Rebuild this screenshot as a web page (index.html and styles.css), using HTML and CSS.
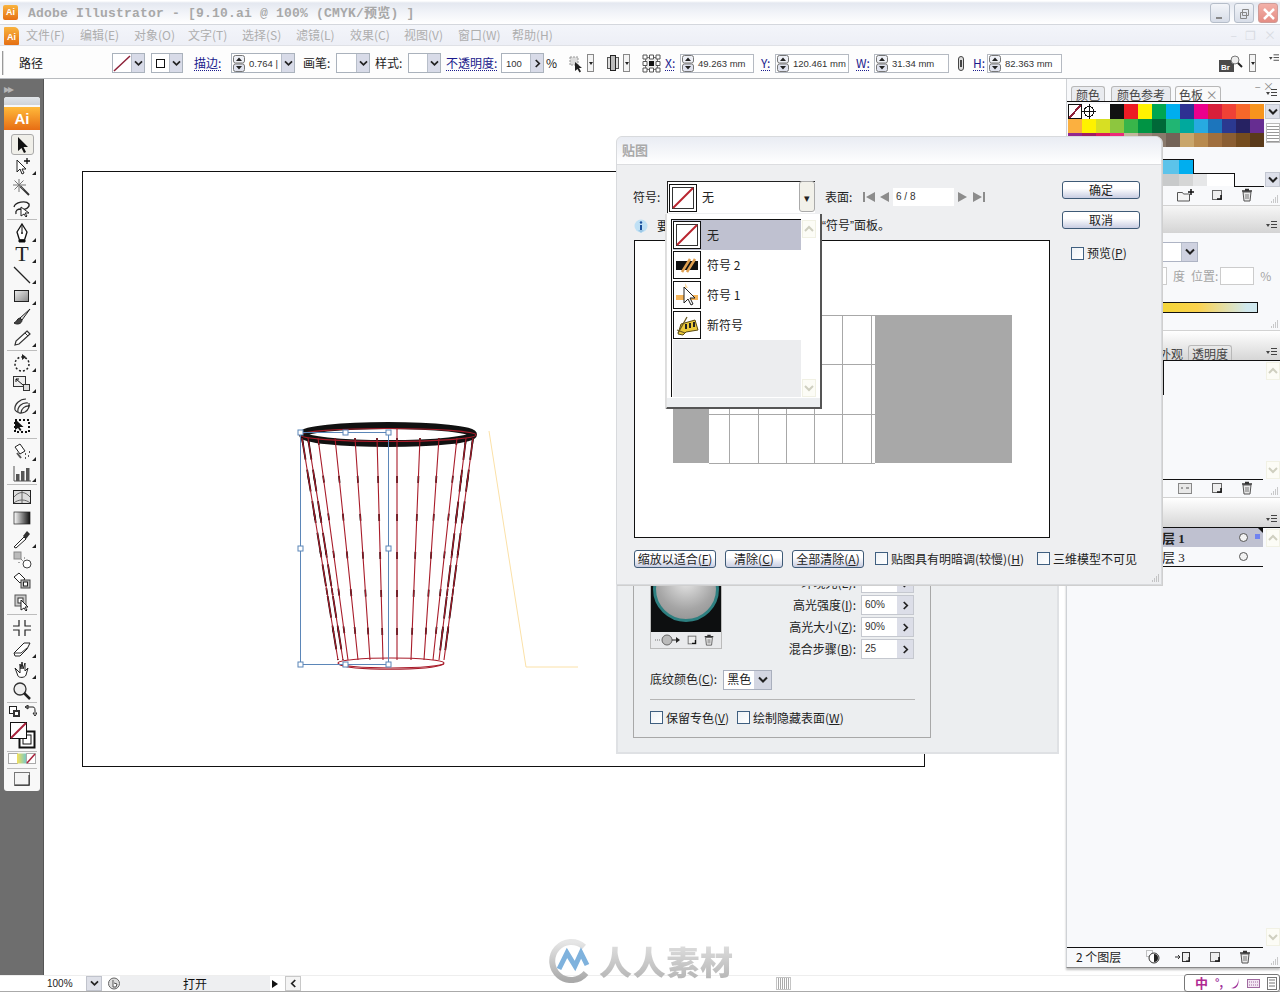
FILE: index.html
```html
<!DOCTYPE html>
<html lang="zh">
<head>
<meta charset="utf-8">
<title>Adobe Illustrator</title>
<link rel="stylesheet" href="styles.css">
</head>
<body>
<svg class="defs" aria-hidden="true">
  <symbol id="chev" viewBox="0 0 10 8"><path d="M1 1.5 5 5.5 9 1.5" fill="none" stroke="#222" stroke-width="2"/></symbol>
  <symbol id="chevr" viewBox="0 0 8 10"><path d="M2 1 6 5 2 9" fill="none" stroke="#222" stroke-width="2"/></symbol>
  <symbol id="up" viewBox="0 0 10 8"><path d="M1 6 5 2 9 6" fill="none" stroke="#cfcfc0" stroke-width="2"/></symbol>
  <symbol id="down" viewBox="0 0 10 8"><path d="M1 2 5 6 9 2" fill="none" stroke="#cfcfc0" stroke-width="2"/></symbol>
  <symbol id="spin" viewBox="0 0 12 17"><rect x=".5" y=".5" width="11" height="7.5" rx="2" fill="#eef0f6" stroke="#777"/><rect x=".5" y="9" width="11" height="7.5" rx="2" fill="#dfe2ee" stroke="#777"/><path d="M3 6 6 2.5 9 6z M3 11 6 14.5 9 11z" fill="#222"/></symbol>
  <symbol id="none" viewBox="0 0 28 28"><rect x=".5" y=".5" width="27" height="27" fill="#fff" stroke="#111"/><rect x="3.5" y="3.5" width="21" height="21" fill="#fff" stroke="#333"/><path d="M4 24 24 4" stroke="#b8242e" stroke-width="2"/></symbol>
  <symbol id="trash" viewBox="0 0 14 14"><path d="M3 4h8l-1 9H4z" fill="#e8e8e8" stroke="#555"/><path d="M2 3h10M5 1.500h4" stroke="#333" stroke-width="1.500"/><path d="M6 6v5M8 6v5" stroke="#777"/></symbol>
  <symbol id="newdoc" viewBox="0 0 14 14"><rect x="2.500" y="2.500" width="9" height="9" fill="#eee" stroke="#666"/><path d="M7 11 11 11 11 7" fill="none" stroke="#111" stroke-width="1.500"/></symbol>
  <symbol id="folder" viewBox="0 0 18 14"><path d="M1.500 4.500h5l1 1.500h6v7h-12z" fill="#f4f4f4" stroke="#555"/><path d="M15 1v6M12 4h6" stroke="#111" stroke-width="1.500"/></symbol>
  <symbol id="menu" viewBox="0 0 11 8"><path d="M0 3h4L2 6z" fill="#444"/><path d="M5 .5h6M5 3.500h6M5 6.500h6" stroke="#444"/></symbol>
  <symbol id="grip" viewBox="0 0 9 9"><path d="M8 1h1M6 3h1M8 3h1M4 5h1M6 5h1M8 5h1M2 7h1M4 7h1M6 7h1M8 7h1" stroke="#999" stroke-width="1"/></symbol>
</svg>

<div class="app">
  <header class="titlebar">
    <span class="applogo">Ai</span>
    <span class="apptitle">Adobe Illustrator - [9.10.ai @ 100% (CMYK/预览) ]</span>
    <div class="winctl">
      <span class="wbtn"><svg width="19" height="20" viewBox="0 0 19 20"><path d="M5 14h6" stroke="#888" stroke-width="2"/></svg></span>
      <span class="wbtn"><svg width="19" height="20" viewBox="0 0 19 20"><path d="M7.500 5.500h6v6h-6zM5.500 8.500h6v6h-6z" fill="none" stroke="#888"/></svg></span>
      <span class="wbtn wclose"><svg width="20" height="20" viewBox="0 0 20 20"><path d="M5 5 15 15M15 5 5 15" stroke="#fff" stroke-width="2.500"/></svg></span>
    </div>
  </header>

  <nav class="menubar">
    <span class="docicon">Ai</span>
    <span class="mi">文件(F)</span><span class="mi">编辑(E)</span><span class="mi">对象(O)</span><span class="mi">文字(T)</span><span class="mi">选择(S)</span><span class="mi">滤镜(L)</span><span class="mi">效果(C)</span><span class="mi">视图(V)</span><span class="mi">窗口(W)</span><span class="mi">帮助(H)</span>
    <div class="docctl"><i>–</i><i>❐</i><i>×</i></div>
  </nav>

  <div class="ctrlbar">
    <span class="grip"></span>
    <span class="lb w26 ml15">路径</span>
    <span class="sel w33 ml67"><span class="selbox"><svg width="18" height="17" viewBox="0 0 18 17"><path d="M1 16 17 1" stroke="#8d2038" stroke-width="1.500"/></svg></span><span class="arw"><svg width="9" height="7"><use href="#chev"/></svg></span></span>
    <span class="sel w32 ml6"><span class="selbox"><svg width="9" height="9" viewBox="0 0 9 9"><rect x=".5" y=".5" width="8" height="8" fill="none" stroke="#111"/></svg></span><span class="arw"><svg width="9" height="7"><use href="#chev"/></svg></span></span>
    <span class="lb lnk w26 ml11">描边:</span>
    <span class="sel w64 ml11"><span class="spinbox"><svg width="12" height="17"><use href="#spin"/></svg></span><span class="selbox val">0.764 |</span><span class="arw"><svg width="9" height="7"><use href="#chev"/></svg></span></span>
    <span class="lb w28 ml8">画笔:</span>
    <span class="sel w34 ml5"><span class="selbox"></span><span class="arw"><svg width="9" height="7"><use href="#chev"/></svg></span></span>
    <span class="lb w27 ml5">样式:</span>
    <span class="sel w33 ml6"><span class="selbox"></span><span class="arw"><svg width="9" height="7"><use href="#chev"/></svg></span></span>
    <span class="lb lnk w51 ml5">不透明度:</span>
    <span class="sel w43 ml4"><span class="selbox val">100</span><span class="arw"><svg width="7" height="9"><use href="#chevr"/></svg></span></span>
    <span class="lb w11 ml2">%</span>
    <svg class="ic ml10" width="19" height="19" viewBox="0 0 19 19"><path d="M3 3h8v8H3z" fill="#ddd" stroke="#999" stroke-dasharray="2 1"/><path d="M8 8v9l2.500-2 2 3.500 1.500-1-2-3.500h3z" fill="#222"/></svg>
    <span class="tiny ml1"></span>
    <svg class="ic ml12" width="14" height="18" viewBox="0 0 14 18"><rect x="1.500" y="3.500" width="11" height="11" fill="#ddd" stroke="#555"/><rect x="4.500" y="1.500" width="5" height="15" fill="#bbb" stroke="#222"/></svg>
    <span class="tiny ml3"></span>
    <svg class="ic ml12" width="19" height="19" viewBox="0 0 19 19"><rect x="3.500" y="3.500" width="12" height="12" fill="#eee" stroke="#777"/><rect x="7" y="7" width="5" height="5" fill="#111"/><path d="M1 1h4v4H1zM7.500 1h4v4h-4zM14 1h4v4h-4zM1 7.500h4v4H1zM14 7.500h4v4h-4zM1 14h4v4H1zM7.500 14h4v4h-4zM14 14h4v4h-4z" fill="#fff" stroke="#555"/></svg>
    <span class="lb lnk w12 ml4">X:</span>
    <span class="fld w74 ml3"><svg width="12" height="17"><use href="#spin"/></svg><b>49.263 mm</b></span>
    <span class="lb lnk w12 ml7">Y:</span>
    <span class="fld w74 ml2"><svg width="12" height="17"><use href="#spin"/></svg><b>120.461 mm</b></span>
    <span class="lb lnk w14 ml7">W:</span>
    <span class="fld w75 ml4"><svg width="12" height="17"><use href="#spin"/></svg><b>31.34 mm</b></span>
    <svg class="ic ml8" width="8" height="17" viewBox="0 0 8 17"><rect x="1.500" y="1.500" width="5" height="14" rx="2.500" fill="#ddd" stroke="#444"/><rect x="3" y="5" width="2" height="7" fill="#444"/></svg>
    <span class="lb lnk w12 ml8">H:</span>
    <span class="fld w75 ml2"><svg width="12" height="17"><use href="#spin"/></svg><b>82.363 mm</b></span>
    <svg class="ic ml157" width="24" height="17" viewBox="0 0 24 17"><rect x="0" y="5" width="15" height="12" fill="#4a4a4a"/><text x="2" y="15" font-size="8" font-weight="bold" fill="#fff" font-family="Liberation Sans">Br</text><circle cx="16" cy="5" r="4" fill="#eee" stroke="#777"/><path d="M19 8l4 4" stroke="#222" stroke-width="2"/></svg>
    <span class="tiny ml6"></span>
    <svg class="ic ml13 up6" width="10" height="8"><use href="#menu"/></svg>
  </div>

  <main class="main">
    <aside class="toolcol">
      <div class="chevs">▸▸</div>
      <div class="toolbox">
        <div class="tbhead"></div>
        <div class="ailogo">Ai</div>

        <div class="tgroup first">
          <div class="tool active"><svg viewBox="0 0 22 20"><path d="M7 2v14l3.500-3 2.500 5 2-1-2.500-5h4.500z" fill="#111"/></svg></div>
          <div class="tool more"><svg viewBox="0 0 22 20"><path d="M6 4v12l3-3 2 5 2-1-2-4h4z" fill="#fff" stroke="#222"/><path d="M16 2v6M13 5h6" stroke="#111" stroke-width="1.300"/></svg></div>
          <div class="tool"><svg viewBox="0 0 22 20"><path d="M9 9 18 18" stroke="#333" stroke-width="2"/><path d="M8 2v13M2 8h13M3.500 3.500l9 9M12.500 3.500l-9 9" stroke="#777"/></svg></div>
          <div class="tool"><svg viewBox="0 0 22 20"><path d="M3 9c1-5 12-7 15-3 1 4-4 6-8 5-3 0-6 1-5 5" fill="none" stroke="#222" stroke-width="1.300"/><path d="M10 9v9l3-2 2 3 1-1-2-3h4z" fill="#fff" stroke="#222"/></svg></div>
        </div>

        <div class="tgroup g2">
          <div class="tool more"><svg viewBox="0 0 22 20"><path d="M11 1 16 9 13.500 17h-5L6 9z" fill="#fff" stroke="#111" stroke-width="1.300"/><path d="M11 2v7M8 17h6v2H8z" stroke="#111"/><circle cx="11" cy="10" r="1" fill="#111"/></svg></div>
          <div class="tool more ttxt">T</div>
          <div class="tool more"><svg viewBox="0 0 22 20"><path d="M3 2 19 18" stroke="#222" stroke-width="1.200"/></svg></div>
          <div class="tool more"><svg viewBox="0 0 22 20"><defs><linearGradient id="g1" x1="0" y1="0" x2="1" y2="1"><stop offset="0" stop-color="#eee"/><stop offset="1" stop-color="#888"/></linearGradient></defs><rect x="3.500" y="4.500" width="14" height="11" fill="url(#g1)" stroke="#222"/></svg></div>
          <div class="tool"><svg viewBox="0 0 22 20"><path d="M19 2 9 11l2 2z" fill="#ddd" stroke="#222"/><path d="M9 11c-3 0-3 4-6 5 3 2 8 1 8-3z" fill="#444" stroke="#222"/></svg></div>
          <div class="tool more"><svg viewBox="0 0 22 20"><path d="M16 3l3 3L8 16l-4 1 1-4z" fill="#fff" stroke="#333" stroke-width="1.200"/><path d="M14 5l3 3" stroke="#333"/></svg></div>
        </div>

        <div class="tgroup g3">
          <div class="tool more"><svg viewBox="0 0 22 20"><circle cx="11" cy="11" r="7" fill="none" stroke="#222" stroke-width="1.500" stroke-dasharray="2 2"/><path d="M11 1v6l4-3z" fill="#222"/></svg></div>
          <div class="tool more"><svg viewBox="0 0 22 20"><rect x="2.500" y="2.500" width="12" height="10" fill="#eee" stroke="#333"/><rect x="12.500" y="10.500" width="6" height="6" fill="#ddd" stroke="#333"/><path d="M5 5l7 6M5 5h3M5 5v3" fill="none" stroke="#111"/></svg></div>
          <div class="tool more"><svg viewBox="0 0 22 20"><path d="M4 15C3 9 9 4 15 4M7 17c-1-5 4-10 10-9M10 18c0-4 4-8 9-7M4 15c2 3 6 4 10 2 3-2 5-4 4-9" fill="none" stroke="#333" stroke-width="1.200"/></svg></div>
          <div class="tool"><svg viewBox="0 0 22 20"><rect x="4" y="4" width="14" height="12" fill="none" stroke="#111" stroke-width="2" stroke-dasharray="2 2"/><path d="M4 3v11l3-2 2 3 1.500-1-2-3h4z" fill="#111"/></svg></div>
        </div>

        <div class="tgroup g4">
          <div class="tool more"><svg viewBox="0 0 22 20"><path d="M4 5l5-3 5 7-5 3z" fill="#fff" stroke="#222"/><path d="M6 11l4 5" stroke="#555" stroke-width="2"/><path d="M14 12h1M17 14h1M14 16h1M18 10h1" stroke="#222" stroke-width="1.500"/></svg></div>
          <div class="tool more"><svg viewBox="0 0 22 20"><path d="M3 3v15h17" fill="none" stroke="#555"/><rect x="5" y="11" width="3.500" height="7" fill="#555"/><rect x="10" y="8" width="3.500" height="10" fill="#555"/><rect x="15" y="5" width="3.500" height="13" fill="#555"/></svg></div>
        </div>

        <div class="tgroup g5">
          <div class="tool"><svg viewBox="0 0 22 20"><rect x="2.500" y="3.500" width="17" height="13" fill="#ddd" stroke="#222"/><path d="M3 10c5-6 11-6 16 0M11 4v12M3 16c4-4 12-4 16 0" fill="none" stroke="#666"/></svg></div>
          <div class="tool"><svg viewBox="0 0 22 20"><defs><linearGradient id="g2"><stop offset="0" stop-color="#fff"/><stop offset="1" stop-color="#111"/></linearGradient></defs><rect x="3" y="4" width="16" height="12" fill="url(#g2)" stroke="#222" stroke-width=".7"/></svg></div>
          <div class="tool more"><svg viewBox="0 0 22 20"><path d="M3 18l10-10 2 2L5 19z" fill="#fff" stroke="#222"/><path d="M12 7l4-5 3 3-4 5z" fill="#333"/></svg></div>
          <div class="tool"><svg viewBox="0 0 22 20"><rect x="3" y="2" width="7" height="7" fill="#bbb" stroke="#888"/><circle cx="16" cy="14" r="4" fill="#fff" stroke="#444"/><path d="M10 9l2 2M13 8h1M8 12v1" stroke="#555" stroke-dasharray="1 1"/></svg></div>
          <div class="tool"><svg viewBox="0 0 22 20"><path d="M3 6l5-4 6 6-5 4z" fill="#fff" stroke="#222"/><rect x="10" y="9" width="9" height="8" fill="#bbb" stroke="#444"/><rect x="12.500" y="11" width="4" height="4" fill="#fff" stroke="#222"/></svg></div>
          <div class="tool"><svg viewBox="0 0 22 20"><rect x="4" y="3" width="11" height="11" fill="#ccc" stroke="#555"/><rect x="7" y="6" width="5" height="5" fill="#fff" stroke="#333"/><path d="M10 8v10l3-2 2 3 1-1-2-3h3z" fill="#fff" stroke="#222"/></svg></div>
        </div>

        <div class="tgroup g6">
          <div class="tool"><svg viewBox="0 0 22 20"><path d="M8 2v6H2M14 2v6h6M8 18v-6H2M14 18v-6h6" fill="none" stroke="#222" stroke-width="1.200"/></svg></div>
          <div class="tool more"><svg viewBox="0 0 22 20"><path d="M3 14 13 4h6l-3 6-7 7H4z" fill="#fff" stroke="#222"/><path d="M3 14h7l6-5" fill="none" stroke="#333"/></svg></div>
          <div class="tool more"><svg viewBox="0 0 22 20"><path d="M4 8l5 5V4l1 5 1-7 1 7 2-6v8l3-3-2 7c-1 3-7 3-8 1z" fill="#fff" stroke="#222"/></svg></div>
          <div class="tool"><svg viewBox="0 0 22 20"><circle cx="9" cy="8" r="6" fill="#eee" stroke="#333" stroke-width="1.300"/><path d="M13 12l6 6" stroke="#222" stroke-width="2.500"/></svg></div>
        </div>

        <div class="tgroup g7">
          <div class="swaprow">
            <svg width="13" height="13" viewBox="0 0 13 13"><rect x="1.500" y="1.500" width="7" height="7" fill="#fff" stroke="#222"/><rect x="5" y="5" width="7" height="7" fill="#333"/><rect x="7" y="7" width="3" height="3" fill="#fff"/></svg>
            <svg width="13" height="13" viewBox="0 0 13 13"><path d="M2 2h7c2 0 2 2 2 5M1 2l3-2v4zM11 11l-2-3h4z" fill="none" stroke="#222"/></svg>
          </div>
          <svg class="fillstroke" width="26" height="27" viewBox="0 0 26 27"><rect x="9.500" y="9.500" width="15" height="16" fill="#fff" stroke="#111" stroke-width="2"/><rect x="13" y="13" width="8" height="9" fill="#fff" stroke="#111"/><rect x=".5" y=".5" width="16" height="16" fill="#fff" stroke="#111"/><path d="M1 16 16 1" stroke="#a8203a" stroke-width="2"/></svg>
        </div>

        <div class="tgroup g8">
          <svg width="28" height="11" viewBox="0 0 28 11"><rect x=".5" y=".5" width="9" height="10" fill="#fff" stroke="#aaa"/><defs><linearGradient id="g3"><stop offset="0" stop-color="#f5e15a"/><stop offset="1" stop-color="#7bc9c3"/></linearGradient></defs><rect x="9" y=".5" width="9" height="10" fill="url(#g3)"/><rect x="18.500" y=".5" width="9" height="10" fill="#fff" stroke="#aaa"/><path d="M19 10 27 1" stroke="#a8203a" stroke-width="1.500"/></svg>
        </div>
        <div class="tgroup g9">
          <svg width="16" height="14" viewBox="0 0 16 14"><rect x=".5" y=".5" width="15" height="13" fill="#f4f4f4" stroke="#777"/><path d="M1 13h14V3" fill="none" stroke="#222"/></svg>
        </div>
      </div>
    </aside>

    <div class="canvas">
      <svg class="art" viewBox="44 79 1022 896" width="1022" height="896">
        <rect x="82.500" y="171.500" width="842" height="595" fill="#fff" stroke="#111"/>
        <path d="M489 431 526 667H578" fill="none" stroke="#fbe1a8"/>
        <ellipse cx="388" cy="434.500" rx="85.500" ry="9" fill="#fff" stroke="#111" stroke-width="7"/>
        <g class="cup-dark">
          <path d="M302 438 338 660M308 438 343 660M318 438 348 660M335 438 358 660M355 438 370 660M377 438 383 660M397 438 397 660M420 438 411 660M439 438 424 660M457 438 433 660M466 438 439 660M473 438 444 660"/>
        </g>
        <g class="cup-darker">
          <path d="M302 438 338 660M308 438 343 660M473 438 444 660M466 438 439 660"/>
        </g>
        <g class="cup-red">
          <path d="M302 438 338 660M308 438 343 660M318 438 348 660M335 438 358 660M355 438 370 660M377 438 383 660M397 428 397 660M420 438 411 660M439 438 424 660M457 438 433 660M466 438 439 660M473 438 444 660"/>
          <ellipse cx="388" cy="435" rx="88" ry="6.500"/>
          <ellipse cx="391" cy="663" rx="53" ry="5"/>
          <path d="M338 664C350 671 430 671 444 664"/>
        </g>
        <g class="bbox">
          <rect x="300.500" y="432.500" width="88" height="232"/>
          <rect x="298" y="430" width="5" height="5"/><rect x="343" y="430" width="5" height="5"/><rect x="386" y="430" width="5" height="5"/>
          <rect x="298" y="546" width="5" height="5"/><rect x="386" y="546" width="5" height="5"/>
          <rect x="298" y="662" width="5" height="5"/><rect x="343" y="662" width="5" height="5"/><rect x="386" y="662" width="5" height="5"/>
        </g>
      </svg>
    </div>

    <div class="dock">
      <section class="panel p1">
        <div class="pclose">– ×</div>
        <div class="tabs">
          <span class="tab">颜色</span><span class="tab t2">颜色参考</span><span class="tab on">色板 <i>×</i></span>
          <svg class="pmenu" width="11" height="8"><use href="#menu"/></svg>
        </div>
        <div class="swbody">
          <svg class="swatches" width="196" height="83" viewBox="0 0 196 83" shape-rendering="crispEdges">
            <rect x="0" y="0" width="14" height="15" fill="#fff"/><path d="M1 14 13 1" stroke="#8d2038" stroke-width="2"/><rect x=".5" y=".5" width="13" height="14" fill="none" stroke="#111"/>
            <rect x="14" y="0" width="14" height="15" fill="#fff"/><circle cx="21" cy="7.500" r="5" fill="none" stroke="#111"/><path d="M21 0v15M14 7.500h14" stroke="#111"/>
            <rect x="28" y="0" width="14" height="15" fill="#fff"/>
            <rect x="42" y="0" width="14" height="15" fill="#111"/><rect x="56" y="0" width="14" height="15" fill="#ed1c24"/><rect x="70" y="0" width="14" height="15" fill="#fff200"/><rect x="84" y="0" width="14" height="15" fill="#00a651"/><rect x="98" y="0" width="14" height="15" fill="#00aeef"/><rect x="112" y="0" width="14" height="15" fill="#2e3192"/><rect x="126" y="0" width="14" height="15" fill="#ec008c"/><rect x="140" y="0" width="14" height="15" fill="#d71f3b"/><rect x="154" y="0" width="14" height="15" fill="#ef4136"/><rect x="168" y="0" width="14" height="15" fill="#f7672a"/><rect x="182" y="0" width="14" height="15" fill="#f7941e"/>
            <rect x="0" y="15" width="14" height="14" fill="#fbb040"/><rect x="14" y="15" width="14" height="14" fill="#fff200"/><rect x="28" y="15" width="14" height="14" fill="#d7df23"/><rect x="42" y="15" width="14" height="14" fill="#8dc63f"/><rect x="56" y="15" width="14" height="14" fill="#39b54a"/><rect x="70" y="15" width="14" height="14" fill="#009444"/><rect x="84" y="15" width="14" height="14" fill="#006838"/><rect x="98" y="15" width="14" height="14" fill="#21b573"/><rect x="112" y="15" width="14" height="14" fill="#00a99d"/><rect x="126" y="15" width="14" height="14" fill="#27aae1"/><rect x="140" y="15" width="14" height="14" fill="#1c75bc"/><rect x="154" y="15" width="14" height="14" fill="#2b3990"/><rect x="168" y="15" width="14" height="14" fill="#262262"/><rect x="182" y="15" width="14" height="14" fill="#662d91"/>
            <rect x="0" y="29" width="14" height="14" fill="#92278f"/><rect x="14" y="29" width="14" height="14" fill="#9e1f63"/><rect x="28" y="29" width="14" height="14" fill="#d91c5c"/><rect x="42" y="29" width="14" height="14" fill="#ec2a7a"/><rect x="56" y="29" width="14" height="14" fill="#c2b59b"/><rect x="70" y="29" width="14" height="14" fill="#9b8579"/><rect x="84" y="29" width="14" height="14" fill="#8a7a6c"/><rect x="98" y="29" width="14" height="14" fill="#736357"/><rect x="112" y="29" width="14" height="14" fill="#c9a66b"/><rect x="126" y="29" width="14" height="14" fill="#b88a4e"/><rect x="140" y="29" width="14" height="14" fill="#a06f3e"/><rect x="154" y="29" width="14" height="14" fill="#8b5e32"/><rect x="168" y="29" width="14" height="14" fill="#754c1e"/><rect x="182" y="29" width="14" height="14" fill="#5a3a1a"/>
            <rect x="94" y="56" width="17" height="14" fill="#5cc3ea"/><rect x="111" y="56" width="14" height="14" fill="#00aeef"/>
            <rect x="94" y="70" width="17" height="12" fill="#c8cacb"/><rect x="111" y="70" width="14" height="12" fill="#d5d6d6"/><rect x="125" y="70" width="14" height="12" fill="#e6e7e8"/><rect x="139" y="70" width="27" height="12" fill="#fff"/>
            <path d="M94 55.500H125.500V70M125 69.500H166.500V82.500H196" fill="none" stroke="#111"/>
          </svg>
          <div class="vscroll dark">
            <span class="sbtn"><svg width="10" height="8"><use href="#chev"/></svg></span>
            <span class="thumb"></span>
            <span class="sbtn"><svg width="10" height="8"><use href="#chev"/></svg></span>
          </div>
        </div>
        <div class="pfoot f1">
          <svg width="18" height="14"><use href="#folder"/></svg>
          <svg width="14" height="14"><use href="#newdoc"/></svg>
          <svg width="14" height="14"><use href="#trash"/></svg>
          <svg class="pgrip" width="9" height="9"><use href="#grip"/></svg>
        </div>
      </section>

      <section class="panel p2">
        <div class="phead"><svg class="pmenu" width="11" height="8"><use href="#menu"/></svg></div>
        <div class="gradsel"><span class="selbox"></span><span class="arw big"><svg width="10" height="8"><use href="#chev"/></svg></span></div>
        <div class="gradpos"><span class="ghost"></span><span>度</span><span>位置:</span><span class="ghost g2box"></span><span>%</span></div>
        <div class="gradbar"></div>
        <svg class="pgrip pg2" width="9" height="9"><use href="#grip"/></svg>
      </section>

      <section class="panel p3">
        <div class="phead short"><span class="tabs2"><span class="tab">外观</span><span class="tab on">透明度</span></span><svg class="pmenu" width="11" height="8"><use href="#menu"/></svg></div>
        <div class="listarea a3">
          <div class="tall"></div>
          <div class="vscroll pale"><span class="sbtn"><svg width="10" height="8"><use href="#up"/></svg></span><span class="sbtn"><svg width="10" height="8"><use href="#down"/></svg></span></div>
        </div>
        <div class="pfoot f3">
          <svg width="14" height="14" viewBox="0 0 14 14"><rect x=".5" y="2.500" width="13" height="10" fill="#e8e8e8" stroke="#888"/><path d="M3 7h2M8 7h3" stroke="#555"/></svg>
          <svg width="14" height="14"><use href="#newdoc"/></svg>
          <svg width="14" height="14"><use href="#trash"/></svg>
          <svg class="pgrip" width="9" height="9"><use href="#grip"/></svg>
        </div>
      </section>

      <section class="panel p4">
        <div class="phead short"><svg class="pmenu" width="11" height="8"><use href="#menu"/></svg></div>
        <div class="listarea a4">
          <div class="layers">
            <div class="layer sel-l"><span>图层 1</span><i class="dot"></i><i class="blue"></i></div>
            <div class="layer"><span class="thin">图层 3</span><i class="dot"></i></div>
          </div>
          <div class="vscroll pale"><span class="sbtn"><svg width="10" height="8"><use href="#up"/></svg></span><span class="sbtn"><svg width="10" height="8"><use href="#down"/></svg></span></div>
        </div>
        <div class="pfoot f4">
          <span class="count">2 个图层</span>
          <svg width="14" height="14" viewBox="0 0 14 14"><rect x=".5" y=".5" width="6" height="6" fill="none" stroke="#888" stroke-dasharray="1 1"/><circle cx="8" cy="8" r="5" fill="#fff" stroke="#333"/><path d="M8 8V4a4 4 0 0 1 0 8z" fill="#222"/></svg>
          <svg width="16" height="14" viewBox="0 0 16 14"><path d="M0 7h5M3 5l2 2-2 2" fill="none" stroke="#333"/><rect x="7.500" y="2.500" width="7" height="9" fill="#eee" stroke="#333"/><path d="M11 11h3V7" fill="none" stroke="#111"/></svg>
          <svg width="14" height="14"><use href="#newdoc"/></svg>
          <svg width="14" height="14"><use href="#trash"/></svg>
          <svg class="pgrip" width="9" height="9"><use href="#grip"/></svg>
        </div>
      </section>
    </div>

    <!-- lower dialog, behind -->
    <div class="dlg3d">
      <div class="fs">
        <div class="fsrow">
          <div class="spherebox">
            <div class="sphere"><i></i></div>
            <div class="sphbar"><svg width="26" height="12" viewBox="0 0 26 12"><path d="M0 6h6" stroke="#777" stroke-dasharray="1 1"/><circle cx="12" cy="6" r="5" fill="#bbb" stroke="#666"/><path d="M17 6h5" stroke="#222"/><path d="M21 3l4 3-4 3z" fill="#222"/></svg><svg width="12" height="12"><use href="#newdoc"/></svg><svg width="12" height="12"><use href="#trash"/></svg></div>
          </div>
          <div class="props">
            <div class="prop"><span>环境光(E):</span><span class="pv"><b></b><i><svg width="7" height="9"><use href="#chevr"/></svg></i></span></div>
            <div class="prop"><span>高光强度(<u>I</u>):</span><span class="pv"><b>60%</b><i><svg width="7" height="9"><use href="#chevr"/></svg></i></span></div>
            <div class="prop"><span>高光大小(<u>Z</u>):</span><span class="pv"><b>90%</b><i><svg width="7" height="9"><use href="#chevr"/></svg></i></span></div>
            <div class="prop"><span>混合步骤(<u>B</u>):</span><span class="pv"><b>25</b><i><svg width="7" height="9"><use href="#chevr"/></svg></i></span></div>
          </div>
        </div>
        <div class="shade"><span>底纹颜色(<u>C</u>):</span><span class="shsel"><span>黑色</span><i><svg width="10" height="8"><use href="#chev"/></svg></i></span></div>
        <div class="sep"></div>
        <div class="checks"><label class="ck"><i></i><span>保留专色(<u>V</u>)</span></label><label class="ck"><i></i><span>绘制隐藏表面(<u>W</u>)</span></label></div>
      </div>
    </div>

    <!-- upper dialog -->
    <div class="dlgmap">
      <div class="dlgtitle">贴图</div>
      <div class="dlgmain">
        <div class="dlgleft">
          <div class="symrow">
            <span class="symlb">符号:</span>
            <span class="symsel"><svg width="28" height="28"><use href="#none"/></svg><span class="symname">无</span><span class="symarrow">▾</span></span>
            <span class="surflb">表面:</span>
            <svg class="nav" width="13" height="10" viewBox="0 0 13 10"><path d="M1 0h2v10H1zM13 0v10L4 5z" fill="#8c8c8c"/></svg>
            <svg class="nav nv2" width="9" height="10" viewBox="0 0 9 10"><path d="M9 0v10L0 5z" fill="#8c8c8c"/></svg>
            <span class="surfval">6 / 8</span>
            <svg class="nav nv3" width="9" height="10" viewBox="0 0 9 10"><path d="M0 0v10L9 5z" fill="#8c8c8c"/></svg>
            <svg class="nav nv4" width="13" height="10" viewBox="0 0 13 10"><path d="M0 0v10L9 5zM10 0h2v10h-2z" fill="#8c8c8c"/></svg>
          </div>
          <div class="inforow">
            <svg width="15" height="15" viewBox="0 0 15 15"><circle cx="7" cy="7" r="6.500" fill="#bfe0f5"/><path d="M7 14l3-3H4z" fill="#9cc7e6"/><circle cx="7" cy="3.500" r="1.200" fill="#1a4f9c"/><path d="M6 6h2v5H6z" fill="#1a4f9c"/></svg>
            <span class="infoa">要</span>
            <span class="infob">“符号”面板。</span>
          </div>
          <div class="preview">
            <svg width="414" height="296" viewBox="635 241 414 296" shape-rendering="crispEdges">
              <rect x="875" y="315" width="137" height="148" fill="#a8a8a8"/>
              <rect x="673" y="315" width="36" height="148" fill="#a8a8a8"/>
              <path class="gridl" d="M709 315H875M709 364.500H875M709 414.500H875M709 463H875M729.500 315V463M758.500 315V463M786.500 315V463M814.500 315V463M842.500 315V463M871.500 315V463"/>
            </svg>
          </div>
        </div>
        <div class="dlgright">
          <span class="btn ok">确定</span>
          <span class="btn ok">取消</span>
          <label class="ck ckp"><i></i><span>预览(<u>P</u>)</span></label>
        </div>
      </div>
      <div class="dlgbottom">
        <span class="btn b1"><span>缩放以适合(<u>F</u>)</span></span>
        <span class="btn b2"><span>清除(<u>C</u>)</span></span>
        <span class="btn b3"><span>全部清除(<u>A</u>)</span></span>
        <label class="ck c1"><i></i><span>贴图具有明暗调(较慢)(<u>H</u>)</span></label>
        <label class="ck c2"><i></i><span>三维模型不可见</span></label>
      </div>
      <svg class="dlggrip" width="9" height="9"><use href="#grip"/></svg>

      <div class="dropdown">
        <div class="ddlist">
          <div class="dditem on"><svg width="28" height="28"><use href="#none"/></svg><span>无</span></div>
          <div class="dditem"><svg width="28" height="28" viewBox="0 0 28 28"><rect x=".5" y=".5" width="27" height="27" fill="#fff" stroke="#111"/><rect x="3" y="10" width="22" height="9" fill="#111"/><path d="M9 21 17 8M14 21 22 8" stroke="#e0a050" stroke-width="2.500"/></svg><span>符号 2</span></div>
          <div class="dditem"><svg width="28" height="28" viewBox="0 0 28 28"><rect x=".5" y=".5" width="27" height="27" fill="#fff" stroke="#111"/><path d="M3 14h22v5H3z" fill="#f5b55a"/><path d="M12 2v5h3z" fill="#fbdca8"/><path d="M11 6v16l4-4 3 6 2-1-3-6h5z" fill="#fff" stroke="#222"/></svg><span>符号 1</span></div>
          <div class="dditem"><svg width="28" height="28" viewBox="0 0 28 28"><rect x=".5" y=".5" width="27" height="27" fill="#fff" stroke="#111"/><path d="M8 13l14-4 3 10-12 2-3 3-5-1z" fill="#eac93a" stroke="#5a4a10"/><path d="M5 22 14 6M4 19l8 3" stroke="#6b5a22" stroke-width="1.300"/><path d="M12 13h2v5h-2zM16 12h2v5h-2zM20 11h2v5h-2z" fill="#222"/></svg><span>新符号</span></div>
          <div class="ddfill"></div>
        </div>
        <div class="vscroll pale ddscroll"><span class="sbtn"><svg width="10" height="8"><use href="#up"/></svg></span><span class="sbtn"><svg width="10" height="8"><use href="#down"/></svg></span></div>
      </div>
    </div>
  </main>

  <footer class="status">
    <span class="zoom"><b>100%</b><i><svg width="9" height="7"><use href="#chev"/></svg></i></span>
    <svg class="stico" width="12" height="13" viewBox="0 0 12 13"><circle cx="6" cy="6.500" r="5.500" fill="#ddd" stroke="#666"/><path d="M5 3v7h3l1-3-3-1" fill="#fff" stroke="#555"/></svg>
    <span class="stfield">打开</span>
    <span class="stplay"></span>
    <span class="stprev"><svg width="7" height="9" viewBox="0 0 8 10"><path d="M6 1 2 5 6 9" fill="none" stroke="#222" stroke-width="2"/></svg></span>
    <span class="hthumb"></span>
    <span class="ime"><b class="imez">中</b><span class="imep">°,</span><svg width="10" height="11" viewBox="0 0 10 11"><path d="M8 0c1 5-2 9-7 10 5 2 9-3 7-10z" fill="#a0329a"/></svg><svg width="13" height="9" viewBox="0 0 13 9"><rect x=".5" y=".5" width="12" height="8" fill="#f3e6f3" stroke="#a06aa0"/><path d="M2 3h9M2 6h9" stroke="#a06aa0" stroke-dasharray="1 1"/></svg><svg width="10" height="13" viewBox="0 0 10 13"><rect x=".5" y=".5" width="9" height="12" fill="#fff" stroke="#777"/><path d="M2 3h6M2 6h6M2 9h6" stroke="#777"/></svg></span>
  </footer>

  <div class="watermark">
    <svg width="46" height="44" viewBox="0 0 46 44"><defs><linearGradient id="wm" x1="0" y1="0" x2="0" y2="1"><stop offset="0" stop-color="#e6e6e6"/><stop offset="1" stop-color="#aaa"/></linearGradient></defs><path d="M36 8a19 19 0 1 0 2 26" fill="none" stroke="url(#wm)" stroke-width="6"/><path d="M11 30 19 14 27 27 33 14 39 26" fill="none" stroke="#7fb2dd" stroke-width="5"/></svg>
    <span class="wmtext">人人素材</span>
  </div>
</div>
</body>
</html>
```
FILE: styles.css
```css
* { box-sizing: border-box; }
html, body { margin: 0; padding: 0; background: #fff; }
body { font: 12px/1.2 "Noto Sans CJK SC", "Liberation Sans", sans-serif; color: #222; }
.defs { display: none; }
i { font-style: normal; }
u { text-decoration: underline; }
svg { display: block; flex: none; }

.app { position: relative; width: 1280px; height: 992px; overflow: hidden; display: flex; flex-direction: column; }

/* title */
.titlebar { height: 25px; flex: none; display: flex; align-items: center; padding-left: 3px; border-bottom: 1px solid #d4d7dd;
  background: linear-gradient(#fff 0, #fff 1px, #e4e8f0 3px, #f1f3f8 12px, #fff 24px); }
.applogo { width: 15px; height: 15px; border-radius: 2px; background: linear-gradient(#f9b33e, #e56f13); color: #fff; font: bold 9px "Liberation Sans", sans-serif; text-align: center; line-height: 15px; }
.apptitle { margin: -2px 0 0 10px; font: bold 13px "Liberation Mono", "Noto Sans CJK SC", monospace; color: #a8a8a8; letter-spacing: .2px; }
.winctl { margin-left: auto; display: flex; gap: 4px; padding: 2px 2px 0 0; }
.wbtn { width: 20px; height: 20px; border: 1px solid #b5bdc9; border-radius: 3px; background: linear-gradient(#f3f5f9, #d7dde8); }
.wclose { background: linear-gradient(#f3b0a8, #e48d84); border-color: #cf9b97; }

/* menu */
.menubar { height: 21px; flex: none; display: flex; align-items: center; gap: 13px; padding-left: 26px; position: relative;
  background: linear-gradient(#f3f5fa, #edeff6); border-bottom: 1px solid #dfe1e6; }
.docicon { position: absolute; left: 4px; top: 2px; width: 15px; height: 18px; background: linear-gradient(#f9b33e, #e56f13); color: #fff; font: bold 9px/20px "Liberation Sans", sans-serif; text-align: center; border-radius: 1px 5px 1px 1px; }
.mi { width: 41px; color: #aeaeae; white-space: nowrap; }
.docctl { margin-left: auto; display: flex; gap: 8px; padding-right: 4px; color: #d8dbe2; font-size: 12px; }

/* control bar */
.ctrlbar { height: 33px; flex: none; display: flex; align-items: center; padding: 2px 0 0 2px; background: #fdfdfd; border-bottom: 1px solid #b8bbbf; white-space: nowrap; }
.grip { width: 2px; height: 24px; background: #999; border-right: 1px solid #ddd; }
.lb { flex: none; display: block; }
.lnk { color: #1a1a8c; text-decoration: underline dotted; text-underline-offset: 2px; }
.w11{width:11px}.w12{width:12px}.w14{width:14px}.w26{width:26px}.w27{width:27px}.w28{width:28px}.w32{width:32px}.w33{width:33px}.w34{width:34px}.w43{width:43px}.w51{width:51px}.w64{width:64px}.w74{width:74px}.w75{width:75px}
.ml1{margin-left:1px}.ml2{margin-left:2px}.ml3{margin-left:3px}.ml4{margin-left:4px}.ml5{margin-left:5px}.ml6{margin-left:6px}.ml7{margin-left:7px}.ml8{margin-left:8px}.ml10{margin-left:10px}.ml11{margin-left:11px}.ml12{margin-left:12px}.ml13{margin-left:13px}.ml15{margin-left:15px}.ml67{margin-left:67px}.ml157{margin-left:157px}
.up6 { align-self: flex-start; margin-top: 6px; }
.sel { display: flex; height: 20px; flex: none; border: 1px solid #aab2bc; background: #fff; }
.selbox { flex: 1; min-width: 0; display: flex; align-items: center; justify-content: center; overflow: hidden; }
.selbox.val { justify-content: flex-start; padding-left: 4px; font: 9.5px "Liberation Sans", sans-serif; color: #333; }
.spinbox { flex: none; padding: 1px 0 0 1px; }
.arw { flex: none; width: 13px; display: flex; align-items: center; justify-content: center; background: #d8dbe8; border-left: 1px solid #b8bfca; }
.tiny { width: 7px; height: 18px; flex: none; border: 1px solid #888; background: #f4f4f4; position: relative; }
.tiny::after { content: ""; position: absolute; left: 1px; top: 7px; border: 2px solid transparent; border-top: 3px solid #222; }
.fld { flex: none; display: flex; align-items: center; gap: 4px; height: 19px; border: 1px solid #b5bac2; background: #fff; padding-left: 1px; }
.fld b { font: 9.5px "Liberation Sans", sans-serif; color: #333; white-space: nowrap; }

/* main */
.main { position: relative; flex: 1; min-height: 0; display: flex; }
.toolcol { width: 44px; flex: none; background: #6e6e6e; padding: 0 4px 0 4px; border-right: 1px solid #555; }
.chevs { height: 18px; color: #b5b5b5; font-size: 12px; line-height: 18px; letter-spacing: -2px; }
.toolbox { width: 36px; background: #f8f8f8; border-radius: 3px; display: flex; flex-direction: column; align-items: stretch; }
.tbhead { height: 8px; background: linear-gradient(#e2e6ea, #cfd3d8); border-radius: 3px 3px 0 0; }
.ailogo { margin: 2px 0 0; height: 23px; background: linear-gradient(#ffb93a, #e76d14); color: #fff; font: bold 15px/23px "Liberation Sans", sans-serif; text-align: center; }
.tgroup { border-top: 1px solid #bdbdbd; margin: 0 3px; display: flex; flex-direction: column; align-items: center; }
.tgroup.first { border-top: 0; margin-top: 4px; padding-bottom: 1px; }
.g2 { padding: 2px 0 2px; } .g3 { padding: 1px 0 2px; } .g4 { padding: 2px 0 1px; } .g5 { padding: 1px 0 2px; } .g6 { padding: 2px 0 1px; }
.g7 { height: 49px; } .g8 { height: 17px; padding-top: 1px; } .g9 { height: 23px; padding-top: 3px; }
.tool { position: relative; width: 30px; height: 21px; display: flex; align-items: center; justify-content: center; flex: none; }
.tool svg { width: 22px; height: 20px; }
.tool.active { border: 1px solid #aaa; border-radius: 3px; background: #f0efe9; width: 23px; }
.tool.more::after { content: ""; position: absolute; right: 1px; bottom: 1px; border-left: 4px solid transparent; border-bottom: 4px solid #222; }
.ttxt { font: 22px/21px "Liberation Serif", serif; color: #222; }
.swaprow { width: 100%; display: flex; justify-content: space-between; padding: 2px 0 0 1px; height: 19px; }
.fillstroke { align-self: flex-start; margin-left: 3px; }

.canvas { flex: none; width: 1022px; background: #fff; }
.art { display: block; }
.cup-dark path { fill: none; stroke: #1a0a0c; stroke-width: 1.700; stroke-dasharray: 7 31; }
.cup-darker path { fill: none; stroke: #1a0a0c; stroke-width: 1.800; stroke-dasharray: 22 10; }
.cup-red path, .cup-red ellipse { fill: none; stroke: #a81c2a; stroke-width: 1.100; }
.bbox rect { fill: #fff; stroke: #5b86b8; }
.bbox rect:first-child { fill: none; }

/* dock */
.dock { flex: none; width: 214px; display: flex; flex-direction: column; }
.panel { position: relative; flex: none; background: #f8f9fb; border-left: 1px solid #cfd2d6; border-bottom: 1px solid #d2d2d2; }
.p1 { height: 127px; } .p2 { height: 125px; } .p3 { height: 167px; } .p4 { height: 470px; border-bottom-color: #888; box-shadow: 0 2px 2px rgba(0,0,0,.25); }
.pclose { position: absolute; right: 6px; top: 1px; color: #888; font-size: 11px; }
.tabs { height: 23px; display: flex; align-items: flex-end; padding: 0 0 0 4px; position: relative; border-bottom: 1px solid #111; }
.tab { height: 15px; padding: 0 3px; margin-right: 1px; border: 1px solid #b8b8b8; border-bottom: 0; border-radius: 3px 3px 0 0; background: #e9ebef; color: #444; font-size: 12px; line-height: 15px; white-space: nowrap; }
.tab.t2 { margin-left: 5px; margin-right: 4px; width: 60px; text-align: center; }
.tabs .tab:first-child { width: 34px; text-align: center; }
.tab.on { background: #fafafa; width: 46px; }
.tab i { color: #888; }
.pmenu { position: absolute; right: 3px; bottom: 4px; }
.swbody { display: flex; height: 83px; padding-left: 1px; margin-top: 2px; }
.vscroll { position: absolute; display: flex; flex-direction: column; justify-content: space-between; align-items: center; }
.swbody .vscroll { position: static; width: 16px; height: 83px; margin-left: 1px; }
.dark .sbtn { width: 15px; height: 15px; background: #dde0ea; border: 1px solid #c3c7d1; display: flex; align-items: center; justify-content: center; }
.thumb { width: 14px; height: 20px; border: 1px solid #bbb; background: repeating-linear-gradient(#fff 0, #fff 2px, #999 2px, #999 3px); margin-bottom: 25px; }
.pale .sbtn { width: 14px; height: 18px; background: #fcfcf6; border: 1px solid #f1f1e4; display: flex; align-items: center; justify-content: center; }
.pfoot { position: absolute; left: 0; right: 0; bottom: 0; height: 18px; display: flex; align-items: center; }
.pfoot .pgrip { position: absolute; right: 2px; bottom: 1px; }
.f1 { padding-left: 109px; bottom: 0; height: 20px; } .f1 svg:nth-child(2) { margin-left: 16px; } .f1 svg:nth-child(3) { margin-left: 16px; }
.f3 { padding-left: 111px; height: 18px; } .f3 svg:nth-child(2) { margin-left: 18px; } .f3 svg:nth-child(3) { margin-left: 16px; }
.f4 { padding-left: 9px; height: 20px; } .f4 svg:nth-child(2) { margin-left: 14px; } .f4 svg:nth-child(3) { margin-left: 15px; } .f4 svg:nth-child(4) { margin-left: 17px; } .f4 svg:nth-child(5) { margin-left: 16px; }
.count { width: 56px; font-size: 12px; white-space: nowrap; }

.phead { height: 27px; position: relative; background: linear-gradient(#fff, #d6d6d6); }
.phead.short { height: 30px; border-bottom: 1px solid #111; }
.p2 .phead { height: 27px; background: linear-gradient(#f6f6f6, #d4d4d4); }
.gradsel { display: flex; margin: 9px 0 0 90px; width: 41px; height: 20px; border: 1px solid #aeb4c4; background: #fff; }
.arw.big { width: 16px; background: #cfd2e0; }
.gradpos { margin: 4px 0 0 90px; display: flex; gap: 6px; align-items: center; color: #a5a5a5; height: 20px; white-space: nowrap; }
.ghost { width: 10px; height: 18px; border: 1px solid #ccc; background: #fff; }
.g2box { width: 34px; margin-left: -4px; }
.gradbar { margin: 16px 0 0 90px; width: 101px; height: 11px; border: 1px solid #111; background: linear-gradient(90deg, #f4d53a 10%, #fbd24e 40%, #d0e8ee 90%); }
.pg2 { position: absolute; right: 2px; bottom: 1px; }
.tabs2 { position: absolute; left: 88px; bottom: 0; display: flex; }
.tabs2 .tab { background: transparent; height: 15px; width: auto; }
.tabs2 .tab:first-child { border-color: transparent; }
.listarea { position: relative; margin-left: 0; }
.a3 { height: 119px; }
.a3 .tall { position: absolute; left: 96px; top: 0; height: 34px; border-left: 1px solid #111; }
.a3 .vscroll { right: 2px; top: 1px; bottom: 0; }
.a3 { border-bottom: 1px solid #111; margin-right: 17px; }
.a3 .vscroll { right: -17px; }
.a4 { height: 420px; margin-right: 17px; border-bottom: 1px solid #111; }
.a4 .vscroll { right: -17px; top: 1px; bottom: 1px; }
.layers { border-bottom: 1px solid #111; }
.layer { height: 19px; padding-left: 82px; position: relative; display: flex; align-items: center; font: 13px "Liberation Serif", "Noto Sans CJK SC", serif; }
.layer span { flex: none; font-weight: bold; width: 90px; }
.layer .thin { font-weight: normal; }
.sel-l { background: #bfc1d0; }
.sel-l::after { content: ""; position: absolute; right: 0; top: 0; border-left: 5px solid transparent; border-top: 5px solid #111; }
.dot { position: absolute; left: 172px; top: 5px; width: 9px; height: 9px; border-radius: 50%; border: 1px solid #555; background: #f2f2f2; }
.blue { position: absolute; left: 188px; top: 6px; width: 5px; height: 5px; background: #6f82f0; }

/* dialogs */
.dlg3d { position: absolute; left: 616px; top: 471px; width: 443px; height: 204px; background: #eceef0; border: 2px solid #dfe1e4; padding-left: 15px; padding-top: 5px; }
.fs { width: 298px; height: 181px; border: 1px solid #a8a8a8; padding: 14px 15px 0 16px; }
.fsrow { display: flex; }
.spherebox { width: 72px; height: 87px; margin-top: -10px; display: flex; flex-direction: column; border: 1px solid #bbb; flex: none; }
.sphere { height: 69px; background: #0d0f10; position: relative; overflow: hidden; }
.sphere i { position: absolute; left: 2px; top: -7px; width: 66px; height: 66px; border-radius: 50%; border: 3px solid #2d7f80; background: radial-gradient(circle at 50% 35%, #e8e8e8, #a5a5a5 60%, #8a8a8a); }
.sphbar { flex: 1; background: #e9eaec; display: flex; align-items: center; gap: 5px; padding-left: 4px; }
.props { width: 192px; }
.prop { height: 22px; display: flex; align-items: center; justify-content: flex-end; gap: 5px; }
.pv { display: flex; width: 53px; height: 20px; border: 1px solid #c5c8cf; background: #fff; }
.pv b { flex: 1; font: 10px/18px "Liberation Sans", sans-serif; padding-left: 3px; color: #333; }
.pv i { width: 16px; background: #dcdee8; display: flex; align-items: center; justify-content: center; }
.shade { display: flex; align-items: center; height: 21px; margin-top: 9px; }
.shsel { margin-left: 6px; width: 49px; height: 20px; display: flex; align-items: center; border: 1px solid #a9afbd; background: #fff; padding-left: 3px; }
.shsel span { flex: 1; }
.shsel i { width: 17px; height: 18px; background: #d3d6e2; display: flex; align-items: center; justify-content: center; }
.sep { height: 1px; margin-top: 9px; background: #b5b5b5; }
.checks { display: flex; gap: 8px; margin-top: 8px; height: 20px; align-items: center; }
.ck { display: flex; align-items: center; white-space: nowrap; gap: 3px; }
.ck i { width: 13px; height: 13px; flex: none; border: 1px solid #3f5f80; background: linear-gradient(135deg, #eef2f6, #fff); }

.dlgmap { position: absolute; left: 616px; top: 57px; width: 546px; height: 449px; background: #eeeff1; border: 1px solid #d8dadd; border-radius: 6px 6px 0 0; box-shadow: 1px 1px 0 #cfcfcf; }
.dlgtitle { height: 28px; padding: 5px 0 0 5px; font-weight: bold; font-size: 13px; color: #a9a9a9; background: linear-gradient(#e9ecf3, #f6f7fa 60%, #fff); border-bottom: 1px solid #dcdde0; border-radius: 6px 6px 0 0; }
.dlgmain { display: flex; padding: 16px 0 0 17px; }
.dlgleft { width: 416px; flex: none; }
.symrow { height: 32px; display: flex; align-items: center; margin-left: -1px; }
.symlb { width: 34px; }
.symsel { width: 148px; height: 32px; display: flex; align-items: center; background: #fff; border-top: 1px solid #222; border-left: 1px solid #222; padding-left: 1px; position: relative; }
.symname { margin-left: 5px; }
.symarrow { position: absolute; right: 0; top: -1px; width: 16px; height: 31px; border: 1px solid #aaa; border-radius: 3px; background: #f2f1ea; text-align: center; line-height: 30px; font-size: 11px; color: #222; }
.surflb { margin-left: 10px; width: 28px; }
.nav { margin-left: 9px; }
.nv2 { margin-left: 5px; } .nv3 { margin-left: 4px; } .nv4 { margin-left: 6px; }
.surfval { margin-left: 4px; width: 61px; height: 18px; background: #fff; font: 10px/18px "Liberation Sans", sans-serif; padding-left: 3px; color: #333; }
.inforow { height: 15px; margin-top: 6px; display: flex; align-items: center; white-space: nowrap; }
.infoa { margin-left: 8px; }
.infob { margin-left: 153px; font-family: "Liberation Sans", "Noto Sans CJK SC", sans-serif; }
.preview { margin-top: 6px; width: 416px; height: 298px; border: 1px solid #111; background: #fff; }
.gridl { fill: none; stroke: #a8a8a8; }
.dlgright { margin-left: 12px; width: 78px; display: flex; flex-direction: column; gap: 12px; }
.btn { display: flex; align-items: center; justify-content: center; height: 18px; border: 1px solid #3e5a76; border-radius: 3px; background: linear-gradient(#fff 40%, #c8cde2); white-space: nowrap; flex: none; font-size: 12px; }
.ok { width: 78px; height: 18px; }
.ckp { margin: 5px 0 0 9px; }
.dlgbottom { display: flex; align-items: center; padding: 12px 0 0 17px; height: 30px; }
.b1 { width: 82px; } .b2 { width: 58px; margin-left: 9px; } .b3 { width: 72px; margin-left: 9px; }
.c1 { margin-left: 11px; } .c2 { margin-left: 13px; }
.dlggrip { position: absolute; right: 2px; bottom: 1px; }
.dropdown { position: absolute; left: 49px; top: 77px; width: 156px; height: 195px; background: #fff; border-right: 2px solid #555; border-bottom: 2px solid #555; border-left: 1px solid #e0e0e0; box-shadow: -1px 0 0 #ddd; padding: 5px 0 8px 4px; display: flex; background-clip: padding-box; }
.ddlist { width: 130px; flex: none; border-left: 1px solid #111; border-top: 1px solid #111; display: flex; flex-direction: column; padding-left: 1px; height: 178px; }
.dditem { height: 30px; flex: none; display: flex; align-items: center; gap: 6px; background: #fff; }
.dditem.on { background: #bfc1d0; }
.ddfill { flex: 1; background: #ecedef; }
.ddscroll { position: static; flex: none; width: 16px; padding: 1px 0 0; height: 178px; }
.dropdown::after { content: ""; position: absolute; left: 0; right: 0; bottom: 0; height: 9px; background: #eceef0; }

/* status */
.status { height: 17px; flex: none; display: flex; align-items: center; padding-left: 44px; background: #fff; border-top: 1px solid #eee; border-bottom: 1px solid #aaa; position: relative; }
.zoom { width: 58px; height: 15px; display: flex; }
.zoom b { flex: 1; font: 10px/15px "Liberation Sans", sans-serif; padding-left: 3px; color: #222; }
.zoom i { width: 16px; background: #dee0e8; border: 1px solid #c0c3cc; display: flex; align-items: center; justify-content: center; }
.stico { margin-left: 6px; }
.stfield { width: 150px; height: 15px; background: #eeeff1; text-align: center; line-height: 15px; color: #111; padding-right: 0; }
.stplay { margin-left: 2px; border-left: 6px solid #111; border-top: 4px solid transparent; border-bottom: 4px solid transparent; }
.stprev { margin-left: 7px; width: 16px; height: 15px; border: 1px solid #c8c8c8; display: flex; align-items: center; justify-content: center; background: #f4f4f4; }
.hthumb { margin-left: 475px; width: 15px; height: 13px; border: 1px solid #c4c4c4; background: repeating-linear-gradient(90deg, #fff 0, #fff 1px, #aaa 1px, #aaa 2px); }
.ime { position: absolute; right: 0; top: -2px; width: 96px; height: 18px; display: flex; align-items: center; gap: 7px; padding-left: 10px; border: 1px solid #777; border-radius: 3px; background: #fff; }
.imez { color: #b02a92; font-size: 13px; }
.imep { color: #a0329a; font-weight: bold; font-size: 11px; }

/* watermark */
.watermark { position: absolute; left: 548px; top: 939px; display: flex; align-items: center; gap: 5px; }
.wmtext { font: 900 33px/44px "Noto Sans CJK SC", sans-serif; letter-spacing: .7px; background: linear-gradient(#e4e4e4, #b2b2b2); -webkit-background-clip: text; background-clip: text; color: transparent; white-space: nowrap; }
```
